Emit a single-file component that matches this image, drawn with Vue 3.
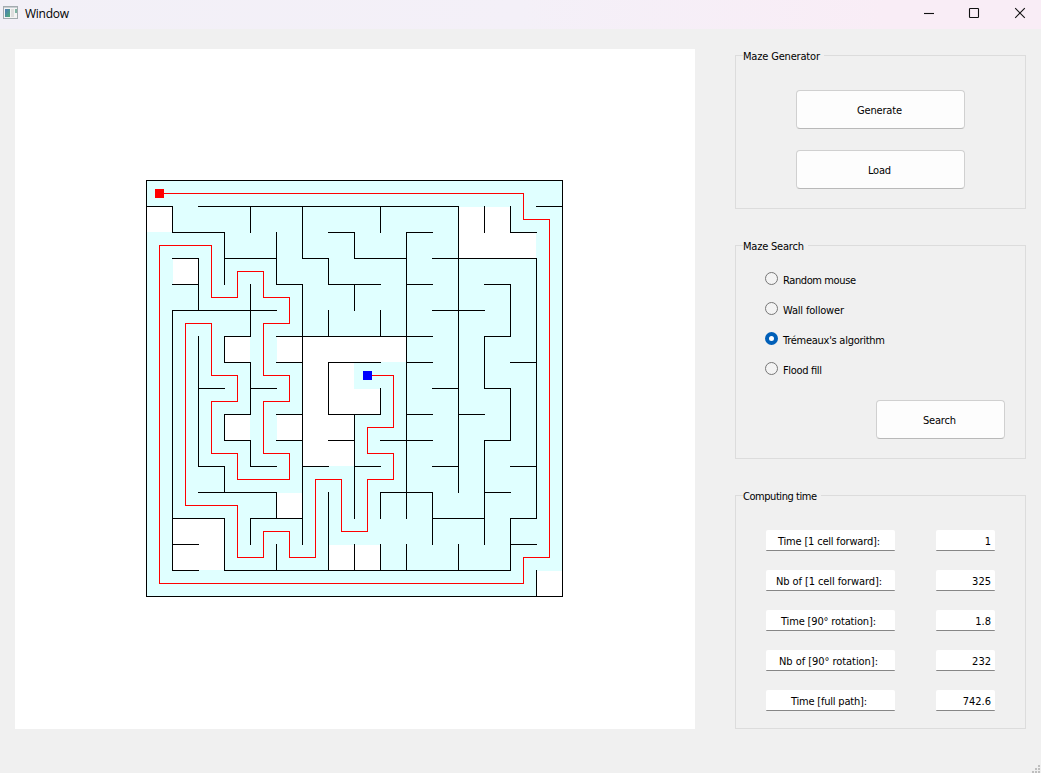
<script setup>
import { ref } from 'vue'

const CELL = 26
const SIZE = 16

// Wall segments per grid line: [line, from, to, from, to, ...]
const horizontal = [
  [0, 0, 16], [1, 0, 1, 2, 12, 15, 16], [2, 1, 3, 7, 8, 10, 11, 14, 15],
  [3, 1, 2, 3, 5, 6, 7, 8, 10, 11, 15], [4, 1, 2, 5, 6, 7, 9, 10, 11, 13, 14],
  [5, 1, 5, 11, 13], [6, 3, 4, 5, 11, 13, 14], [7, 3, 4, 5, 6, 7, 9, 10, 11, 14, 15],
  [8, 2, 3, 4, 5, 11, 12, 13, 14], [9, 3, 4, 5, 6, 7, 9, 10, 11, 12, 13],
  [10, 3, 4, 5, 6, 7, 8, 9, 11, 13, 14], [11, 2, 3, 4, 5, 6, 7, 8, 9, 11, 12, 14, 15],
  [12, 2, 5, 9, 11, 13, 14], [13, 1, 3, 4, 6, 11, 13, 14, 15], [14, 1, 2, 14, 15],
  [15, 1, 2, 3, 14], [16, 0, 16],
]
const vertical = [
  [0, 0, 16], [1, 1, 2, 5, 15], [2, 3, 5, 6, 11], [3, 2, 4, 6, 7, 9, 10, 11, 12, 13, 15],
  [4, 1, 2, 4, 6, 7, 9, 10, 11, 13, 14], [5, 2, 4, 12, 13, 14, 15], [6, 1, 3, 4, 14],
  [7, 3, 4, 5, 6, 7, 9, 12, 15], [8, 2, 3, 4, 5, 9, 13, 14, 15],
  [9, 1, 2, 5, 6, 8, 9, 12, 13, 14, 15], [10, 2, 13, 14, 15], [11, 12, 14],
  [12, 1, 12, 14, 15], [13, 1, 2, 6, 8, 10, 14], [14, 1, 2, 4, 6, 8, 10, 13, 15],
  [15, 3, 13, 15, 16], [16, 0, 16],
]

// Columns never visited, by row
const unvisited = {
  1: [0, 12, 13], 2: [12, 13, 14], 3: [1], 6: [3, 5, 6, 7, 8, 9], 7: [6, 7],
  8: [6, 7, 8], 9: [3, 5, 6, 7], 10: [6, 7], 12: [5], 13: [1, 2], 14: [1, 2, 7, 8], 15: [15],
}

const route = [
  [0, 0], [14, 0], [14, 1], [15, 1], [15, 14], [14, 14], [14, 15], [0, 15], [0, 2], [2, 2],
  [2, 4], [3, 4], [3, 3], [4, 3], [4, 4], [5, 4], [5, 5], [4, 5], [4, 7], [5, 7], [5, 8],
  [4, 8], [4, 10], [5, 10], [5, 11], [3, 11], [3, 10], [2, 10], [2, 8], [3, 8], [3, 7],
  [2, 7], [2, 5], [1, 5], [1, 12], [3, 12], [3, 14], [4, 14], [4, 13], [5, 13], [5, 14],
  [6, 14], [6, 11], [7, 11], [7, 13], [8, 13], [8, 11], [9, 11], [9, 10], [8, 10], [8, 9],
  [9, 9], [9, 7], [8, 7],
]

const cells = []
for (let y = 0; y < SIZE; y++) {
  for (let x = 0; x < SIZE; x++) {
    if (!unvisited[y]?.includes(x)) cells.push({ x: x * CELL, y: y * CELL })
  }
}

function segments(lines, isHorizontal) {
  const parts = []
  for (const [line, ...ends] of lines) {
    for (let i = 0; i < ends.length; i += 2) {
      const start = ends[i] * CELL
      const length = (ends[i + 1] - ends[i]) * CELL + 1
      parts.push(isHorizontal
        ? `M${start} ${line * CELL}h${length}v1h-${length}z`
        : `M${line * CELL} ${start}h1v${length}h-1z`)
    }
  }
  return parts.join('')
}

const walls = segments(horizontal, true) + segments(vertical, false)
const points = route.map(([x, y]) => `${x * CELL + 13.5},${y * CELL + 13.5}`).join(' ')

const algorithms = [
  { name: 'Random mouse', width: 73 },
  { name: 'Wall follower', width: 61 },
  { name: "Trémeaux's algorithm", width: 102 },
  { name: 'Flood fill', width: 39 },
]
const algorithm = ref(algorithms[2].name)

const stats = [
  { label: 'Time [1 cell forward]:', value: '1', width: 102 },
  { label: 'Nb of [1 cell forward]:', value: '325', width: 106 },
  { label: 'Time [90° rotation]:', value: '1.8', width: 95 },
  { label: 'Nb of [90° rotation]:', value: '232', width: 99 },
  { label: 'Time [full path]:', value: '742.6', width: 76 },
]
</script>

<template>
  <div class="window">
    <header class="titlebar">
      <svg class="app-icon" width="16" height="14" viewBox="0 0 16 14">
        <defs>
          <linearGradient id="pane" x1="0" y1="0" x2="1" y2="1">
            <stop offset="0" stop-color="#4c79b8" />
            <stop offset="1" stop-color="#4fae78" />
          </linearGradient>
        </defs>
        <rect x=".5" y=".5" width="14" height="12" fill="#f4f4f4" stroke="#a3abaf" />
        <rect x="1" y="1" width="13" height="1" fill="#c9ced2" />
        <rect x="2" y="3" width="5" height="8" fill="url(#pane)" />
        <rect x="8" y="3" width="3" height="8" fill="#dedede" />
        <rect x="12" y="3" width="2" height="4" fill="#80b5a4" />
      </svg>
      <span class="title"><svg width="44" height="16"><text x="0" y="13" textLength="44">Window</text></svg></span>
      <div class="controls">
        <svg width="10" height="10" viewBox="0 0 10 10"><path d="M1 5.5h10" /></svg>
        <svg width="10" height="10" viewBox="0 0 10 10"><rect x=".5" y=".5" width="9" height="9" rx=".6" /></svg>
        <svg width="10" height="10" viewBox="0 0 10 10"><path d="M.2.2l9.6 9.6M9.8.2L.2 9.8" /></svg>
      </div>
    </header>

    <div class="content">
      <main class="canvas">
        <svg width="417" height="417" viewBox="0 0 417 417" shape-rendering="crispEdges">
          <rect v-for="c in cells" :key="`${c.x}-${c.y}`" :x="c.x" :y="c.y" width="27" height="27" fill="#e0ffff" />
          <path :d="walls" fill="#000" />
          <polyline :points="points" fill="none" stroke="#f00" stroke-width="1" />
          <rect x="9" y="9" width="9" height="9" fill="#f00" />
          <rect x="217" y="191" width="9" height="9" fill="#00f" />
        </svg>
      </main>

      <aside class="panels">
        <section class="group generator">
          <h2><svg width="78" height="16"><text x="0" y="12" textLength="77">Maze Generator</text></svg></h2>
          <button type="button"><svg width="45" height="16"><text x="0" y="12" textLength="45">Generate</text></svg></button>
          <button type="button"><svg width="23" height="16"><text x="0" y="12" textLength="23">Load</text></svg></button>
        </section>

        <section class="group search">
          <h2><svg width="62" height="16"><text x="0" y="12" textLength="61">Maze Search</text></svg></h2>
          <label v-for="a in algorithms" :key="a.name">
            <input v-model="algorithm" type="radio" name="algorithm" :value="a.name">
            <svg :width="a.width" height="16"><text x="0" y="12" :textLength="a.width">{{ a.name }}</text></svg>
          </label>
          <button type="button"><svg width="33" height="16"><text x="0" y="12" textLength="33">Search</text></svg></button>
        </section>

        <section class="group timing">
          <h2><svg width="75" height="16"><text x="0" y="12" textLength="74">Computing time</text></svg></h2>
          <div v-for="s in stats" :key="s.label" class="stat">
            <div class="field name">
              <svg :width="s.width" height="16"><text x="0" y="12" :textLength="s.width">{{ s.label }}</text></svg>
            </div>
            <div class="field value">{{ s.value }}</div>
          </div>
        </section>
      </aside>
    </div>
    <svg class="grip" width="8" height="8" viewBox="0 0 8 8">
      <path d="M6 0h2v2h-2zM3 3h2v2h-2zM6 3h2v2h-2zM0 6h2v2h-2zM3 6h2v2h-2zM6 6h2v2h-2z" fill="#bfbfbf" />
    </svg>
  </div>
</template>

<style>
body {
  margin: 0;
  overflow: hidden;
}
</style>

<style scoped>
.window {
  position: relative;
  width: 1041px;
  height: 773px;
  background: #f0f0f0;
  color: #000;
  font: 11px/16px "DejaVu Sans Condensed", "Noto Sans", sans-serif;
}
.window svg {
  display: block;
  overflow: visible;
}
.titlebar {
  display: flex;
  align-items: center;
  box-sizing: border-box;
  height: 29px;
  padding: 0 16px 3px 3px;
  background: linear-gradient(90deg, #f2f0f7, #f4f0f8 50%, #f9edf6 85%);
}
.title {
  margin-left: 6px;
  font-family: "Open Sans", "Noto Sans", sans-serif;
  font-size: 12px;
}
.controls {
  display: flex;
  gap: 36px;
  margin-left: auto;
}
.controls svg {
  fill: none;
  stroke: #111;
  stroke-width: 1.1;
}
.content {
  display: flex;
  gap: 40px;
  padding: 20px 15px 0;
}
.canvas {
  display: flex;
  box-sizing: border-box;
  width: 680px;
  height: 680px;
  padding: 131px;
  background: #fff;
}
.panels {
  display: flex;
  flex-direction: column;
  gap: 36px;
  width: 291px;
  padding-top: 6px;
}
.group {
  display: flex;
  flex-direction: column;
  box-sizing: border-box;
  border: 1px solid #dcdcdc;
}
h2 {
  align-self: flex-start;
  height: 16px;
  margin: -8px 0 0 7px;
  padding-right: 3px;
  background: #f0f0f0;
  font: inherit;
}
button {
  display: flex;
  align-items: center;
  justify-content: center;
  flex: none;
  box-sizing: border-box;
  width: 169px;
  height: 39px;
  padding: 0 2px 0 0;
  border: 1px solid #d0d0d0;
  border-bottom-color: #b9b9b9;
  border-radius: 4px;
  background: #fdfdfd;
  color: inherit;
  font: inherit;
}
.generator {
  height: 154px;
  align-items: center;
  gap: 21px;
}
.generator h2 {
  margin-bottom: 5px;
}
.search {
  height: 214px;
}
.search h2 {
  margin-bottom: 18px;
}
.search label {
  display: flex;
  align-items: flex-start;
  height: 30px;
  padding-left: 29px;
}
.search label svg {
  margin-left: 5px;
}
.search input {
  appearance: none;
  box-sizing: border-box;
  width: 13px;
  height: 13px;
  margin: 0;
  border: 1px solid #777;
  border-radius: 50%;
  background: #f3f3f3;
}
.search input:checked {
  border: 4px solid #005fb8;
  background: #fff;
}
.search button {
  align-self: flex-end;
  width: 129px;
  margin: 8px 20px 0 0;
}
.timing {
  height: 234px;
}
.timing h2 {
  margin-bottom: 26px;
}
.stat {
  display: flex;
  flex: none;
  gap: 41px;
  height: 40px;
  padding-left: 30px;
}
.timing .stat:last-child {
  height: 21px;
}
.field {
  display: flex;
  box-sizing: border-box;
  height: 21px;
  padding: 3px 4px 0;
  border-bottom: 1px solid #868686;
  border-radius: 2px 2px 1px 1px;
  background: #fff;
}
.name {
  justify-content: center;
  width: 129px;
  padding-right: 8px;
}
.value {
  justify-content: flex-end;
  width: 59px;
  padding-top: 4px;
}
.grip {
  position: absolute;
  right: 1px;
  bottom: 0;
}
</style>
